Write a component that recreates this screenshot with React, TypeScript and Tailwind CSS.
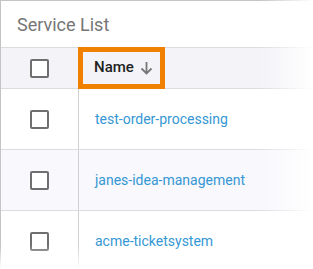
import React from 'react';

const services = ['test-order-processing', 'janes-idea-management', 'acme-ticketsystem'];

const Checkbox: React.FC = () => (
  <span className="block w-[19px] h-[19px] border-2 border-[#6f6f6f] rounded-[2px] bg-white" />
);

export default function App() {
  return (
    <div className="relative w-[313px] h-[269px] overflow-hidden bg-white font-['Roboto',sans-serif]">
      <div className="border-l border-t border-[#c4c4c4] h-full">
        <div className="h-[46px] flex items-center pl-4 text-[18px] text-[#767676]">Service List</div>

        {/* Header */}
        <div className="flex h-[42px] bg-[#f3f3f8] border-y border-[#dcdce0]">
          <div className="w-[78px] flex items-center justify-center border-r border-[#cfcfd4]">
            <Checkbox />
          </div>
          <div className="flex items-center">
            <div className="h-[42px] -mt-px -ml-px w-[87px] border-[5px] border-[#f08000] flex items-center pl-[11px] gap-[6px] text-[15px] font-medium text-[#222]">
              Name
              <svg width="13" height="14" viewBox="0 0 13 14" fill="none" stroke="#777" strokeWidth="1.8">
                <path d="M6.5 1v11.5M1.5 7.5l5 5 5-5" />
              </svg>
            </div>
          </div>
        </div>

        {services.map((s, i) => (
          <div
            key={s}
            className={`flex h-[61px] border-b border-[#dcdce0] ${i === 1 ? 'bg-[#f8f8fd]' : 'bg-white'}`}
          >
            <div className="w-[78px] flex items-center justify-center border-r border-[#cfcfd4]">
              <Checkbox />
            </div>
            <div className="flex items-center pl-4 text-[14px] text-[#3597d3]">{s}</div>
          </div>
        ))}
      </div>

      {/* fade overlays */}
      <div className="absolute top-0 right-0 h-full w-[55px] bg-gradient-to-r from-transparent to-white pointer-events-none" />
      <div className="absolute bottom-0 left-0 w-full h-[24px] bg-gradient-to-b from-transparent to-white pointer-events-none" />
    </div>
  );
}
